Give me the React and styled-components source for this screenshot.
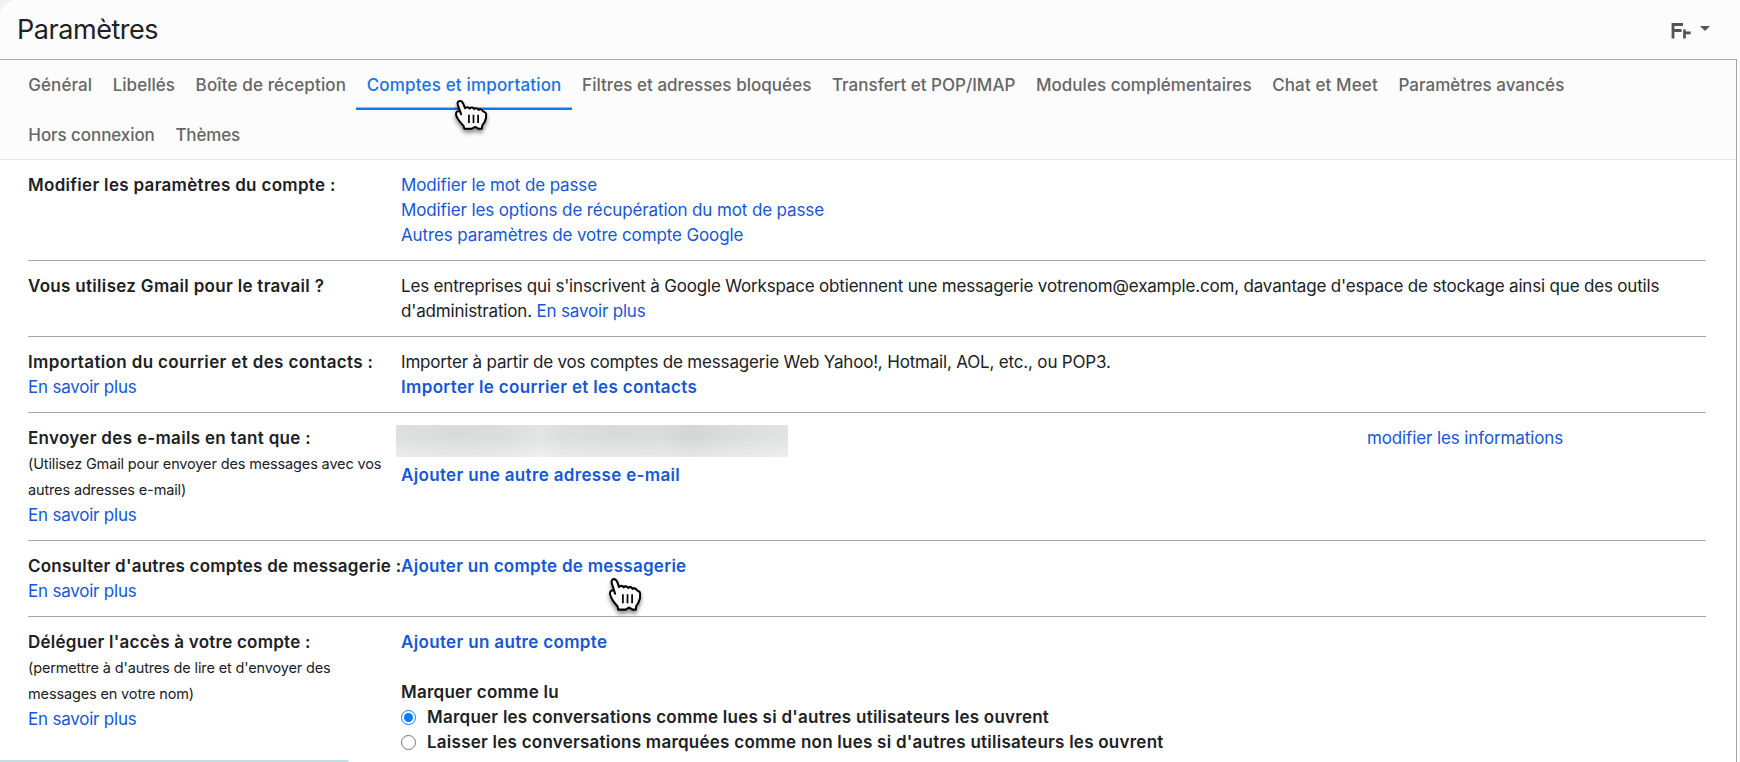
import React from "react"
import styled, { createGlobalStyle } from "styled-components"

const blue = "#1a73e8"
const blueLink = "#1558d6"
const ink = "#202124"
const rule = "#a6a6a6"

const GlobalStyle = createGlobalStyle`
  body {
    margin: 0;
    background: #f0f1f1;
    color: ${ink};
    font-family: Inter, Roboto, "Liberation Sans", sans-serif;
    font-size: 17px;
    line-height: 25px;
    letter-spacing: -0.18px;
  }
`

const Page = styled.div`
  position: relative;
  box-sizing: border-box;
  height: 762px;
  overflow: hidden;
  background: #fcfcfc;
  border-top-left-radius: 16px;
`

const Header = styled.header`
  display: flex;
  align-items: center;
  justify-content: space-between;
  box-sizing: border-box;
  height: 59px;
  padding: 0 30px 0 17px;
  h1 {
    margin: 0;
    font-size: 27px;
    font-weight: 400;
    letter-spacing: -0.45px;
    line-height: 59px;
  }
`

const InputTool = styled.div`
  display: flex;
  align-items: center;
  gap: 9px;
  padding-top: 2px;
`

const Caret = styled.span`
  margin-top: -5px;
  border: 5px solid transparent;
  border-top-color: #555;
  border-bottom: 0;
`

const Panel = styled.main`
  box-sizing: border-box;
  width: 1737px;
  height: 720px;
  border-top: 1px solid ${rule};
  border-right: 1px solid ${rule};
  background: #fff;
`

const Tabs = styled.nav`
  display: flex;
  flex-wrap: wrap;
  box-sizing: border-box;
  height: 100px;
  padding: 0 150px 0 18px;
  background: #fcfcfc;
  border-bottom: 1px solid #e3e8e6;
`

const Tab = styled.a`
  box-sizing: border-box;
  height: 50px;
  padding: 0 10.3px;
  line-height: 50px;
  font-weight: 500;
  white-space: nowrap;
  letter-spacing: ${(props) => props.$tracking}px;
  color: ${(props) => (props.$active ? blue : "#666")};
  border-bottom: 2px solid ${(props) => (props.$active ? blue : "transparent")};
  ${(props) => props.$active && "box-shadow: inset 0 -1px 0 #1a73e880;"}
`

const Row = styled.section`
  display: grid;
  grid-template-columns: 373px 1fr;
  margin: 0 30px 0 28px;
  padding: 13px 0 12px;
  border-bottom: 1px solid ${rule};
`

const Label = styled.div`
  font-weight: 600;
  letter-spacing: ${(props) => props.$tracking || 0.31}px;
  white-space: nowrap;
`

const Hint = styled.div`
  width: 362px;
  font-size: 14.5px;
  line-height: 26px;
  letter-spacing: -0.14px;
`

const Link = styled.a`
  color: ${blueLink};
`

const LinkLine = styled(Link)`
  display: block;
  letter-spacing: -0.12px;
`

const MoreLink = styled(LinkLine)`
  letter-spacing: -0.22px;
`

const Action = styled(LinkLine)`
  font-weight: 600;
  letter-spacing: ${(props) => props.$tracking || 0.34}px;
`

const Sender = styled.div`
  display: flex;
  justify-content: space-between;
  height: 37px;
  padding-right: 143px;
`

const Redacted = styled.div`
  width: 392px;
  height: 32px;
  margin: -1px 0 0 -5px;
  background: linear-gradient(
      to bottom,
      rgba(255, 255, 255, 0) 35%,
      rgba(255, 255, 255, 0.4)
    ),
    linear-gradient(
      to right,
      #dedfdf,
      #d9dada 15%,
      #dbdcdc 28%,
      #e3e4e4 37%,
      #dcdddd 43%,
      #d9dada 55%,
      #dadbdb 68%,
      #d4d5d5 75%,
      #dbdcdc 86%,
      #e1e2e2
    );
`

const RadioGroup = styled.div`
  margin-top: 25px;
`

const Option = styled.label`
  display: flex;
  align-items: center;
  gap: 11px;
  font-weight: 600;
  letter-spacing: 0.245px;
`

const Radio = styled.span`
  display: flex;
  align-items: center;
  justify-content: center;
  box-sizing: border-box;
  width: 15px;
  height: 15px;
  border: ${(props) => (props.$checked ? "1.5px solid #0b7bff" : "1px solid #767676")};
  border-radius: 50%;
  background: #fff;
  &:after {
    content: "";
    width: 9px;
    height: 9px;
    border-radius: 50%;
    background: ${(props) => (props.$checked ? "#0b7bff" : "transparent")};
  }
`

const Pointer = styled.svg`
  position: absolute;
  left: ${(props) => props.$left}px;
  top: ${(props) => props.$top}px;
  overflow: visible;
  filter: drop-shadow(0 3px 2px rgba(0, 0, 0, 0.45));
`

const StatusBubble = styled.div`
  position: absolute;
  left: 0;
  bottom: 0;
  width: 349px;
  height: 2px;
  box-sizing: border-box;
  border-top: 1px solid #cfdcdd;
  border-top-right-radius: 3px;
  background: #ade6e8;
`

const tabs = [
  { name: "Général", tracking: 0.06 },
  { name: "Libellés", tracking: 0.03 },
  { name: "Boîte de réception", tracking: 0.14 },
  { name: "Comptes et importation", tracking: 0.17, active: true },
  { name: "Filtres et adresses bloquées", tracking: 0.04 },
  { name: "Transfert et POP/IMAP", tracking: 0 },
  { name: "Modules complémentaires", tracking: 0.03 },
  { name: "Chat et Meet", tracking: 0.12 },
  { name: "Paramètres avancés", tracking: 0.03 },
  { name: "Hors connexion", tracking: -0.08 },
  { name: "Thèmes", tracking: -0.15 },
]

const Hand = ({ left, top, height }) => (
  <Pointer
    $left={left}
    $top={top}
    width="33"
    height={height}
    viewBox="0 0 33 30"
    preserveAspectRatio="none"
  >
    <path
      d="M5.2 11.6 2.9 5.1C1.9 2.4 3.2 1 4.9 1s2.700 1 3.400 2.800L10 8.200c.7-1.300 3.800-1.500 4.600.3 1.200-1.400 3.700-1.200 4.600.5 1.300-1.200 3.600-.8 4.300.9 1.300-1 3.300-.7 4.300 1 .8 1.400 3.100.7 3.400 3.300.2 3.200-.4 5.800-1.700 8.100-.8 1.500-2 2.300-2.300 3.500l-.3 2.900h-3.500l-3.200-1.800-3.700 1.900H9.300l-.8-3C6.300 23.500 4 21.200 2.600 18.400 1.500 16.600.8 14.700 1 13.300c.3-1.800 2.500-2.600 4.200-1.700l.9 2.700"
      fill="#fafafa"
      stroke="#000"
      strokeWidth="2"
      strokeLinejoin="round"
      strokeLinecap="round"
    />
    <path d="M13.900 14.800v8.200M18.500 14.800v8.200M23.100 14.800v8.200" stroke="#000" strokeWidth="1.700" />
  </Pointer>
)

const LearnMore = () => <MoreLink>En savoir plus</MoreLink>

export default function App() {
  return (
    <Page>
      <GlobalStyle />
      <Header>
        <h1>Paramètres</h1>
        <InputTool>
          <svg width="20" height="16" viewBox="0 0 20 16" fill="none" stroke="#555">
            <path d="M2 15.500V1.500h10M2 7.500h8.500" strokeWidth="2.800" />
            <path d="M13.500 6.500v9M13.500 9.800h6.200" strokeWidth="2.700" />
          </svg>
          <Caret />
        </InputTool>
      </Header>
      <Panel>
        <Tabs>
          {tabs.map((tab) => (
            <Tab key={tab.name} $tracking={tab.tracking} $active={tab.active}>
              {tab.name}
            </Tab>
          ))}
        </Tabs>
        <Row>
          <Label>Modifier les paramètres du compte :</Label>
          <div>
            <LinkLine>Modifier le mot de passe</LinkLine>
            <LinkLine>Modifier les options de récupération du mot de passe</LinkLine>
            <LinkLine>Autres paramètres de votre compte Google</LinkLine>
          </div>
        </Row>
        <Row>
          <Label>Vous utilisez Gmail pour le travail ?</Label>
          <div>
            <div>
              Les entreprises qui s'inscrivent à Google Workspace obtiennent une
              messagerie votrenom@example.com, davantage d'espace de stockage
              ainsi que des outils
            </div>
            <div>
              d'administration. <Link>En savoir plus</Link>
            </div>
          </div>
        </Row>
        <Row>
          <div>
            <Label $tracking={0.36}>Importation du courrier et des contacts :</Label>
            <LearnMore />
          </div>
          <div>
            Importer à partir de vos comptes de messagerie Web Yahoo!, Hotmail,
            AOL, etc., ou POP3.
            <Action>Importer le courrier et les contacts</Action>
          </div>
        </Row>
        <Row>
          <div>
            <Label>Envoyer des e-mails en tant que :</Label>
            <Hint>
              (Utilisez Gmail pour envoyer des messages avec vos autres adresses
              e-mail)
            </Hint>
            <LearnMore />
          </div>
          <div>
            <Sender>
              <Redacted />
              <LinkLine>modifier les informations</LinkLine>
            </Sender>
            <Action>Ajouter une autre adresse e-mail</Action>
          </div>
        </Row>
        <Row>
          <div>
            <Label $tracking={0.24}>Consulter d'autres comptes de messagerie :</Label>
            <LearnMore />
          </div>
          <Action $tracking={0.28}>Ajouter un compte de messagerie</Action>
        </Row>
        <Row>
          <div>
            <Label $tracking={0.24}>Déléguer l'accès à votre compte :</Label>
            <Hint>
              (permettre à d'autres de lire et d'envoyer des
              <br />
              messages en votre nom)
            </Hint>
            <LearnMore />
          </div>
          <div>
            <Action>Ajouter un autre compte</Action>
            <RadioGroup>
              <Label $tracking={0.24}>Marquer comme lu</Label>
              <Option>
                <Radio $checked />
                Marquer les conversations comme lues si d'autres utilisateurs les
                ouvrent
              </Option>
              <Option>
                <Radio />
                Laisser les conversations marquées comme non lues si d'autres
                utilisateurs les ouvrent
              </Option>
            </RadioGroup>
          </div>
        </Row>
      </Panel>
      <Hand left={455} top={100} height={30} />
      <Hand left={609} top={578} height={33} />
      <StatusBubble />
    </Page>
  )
}
